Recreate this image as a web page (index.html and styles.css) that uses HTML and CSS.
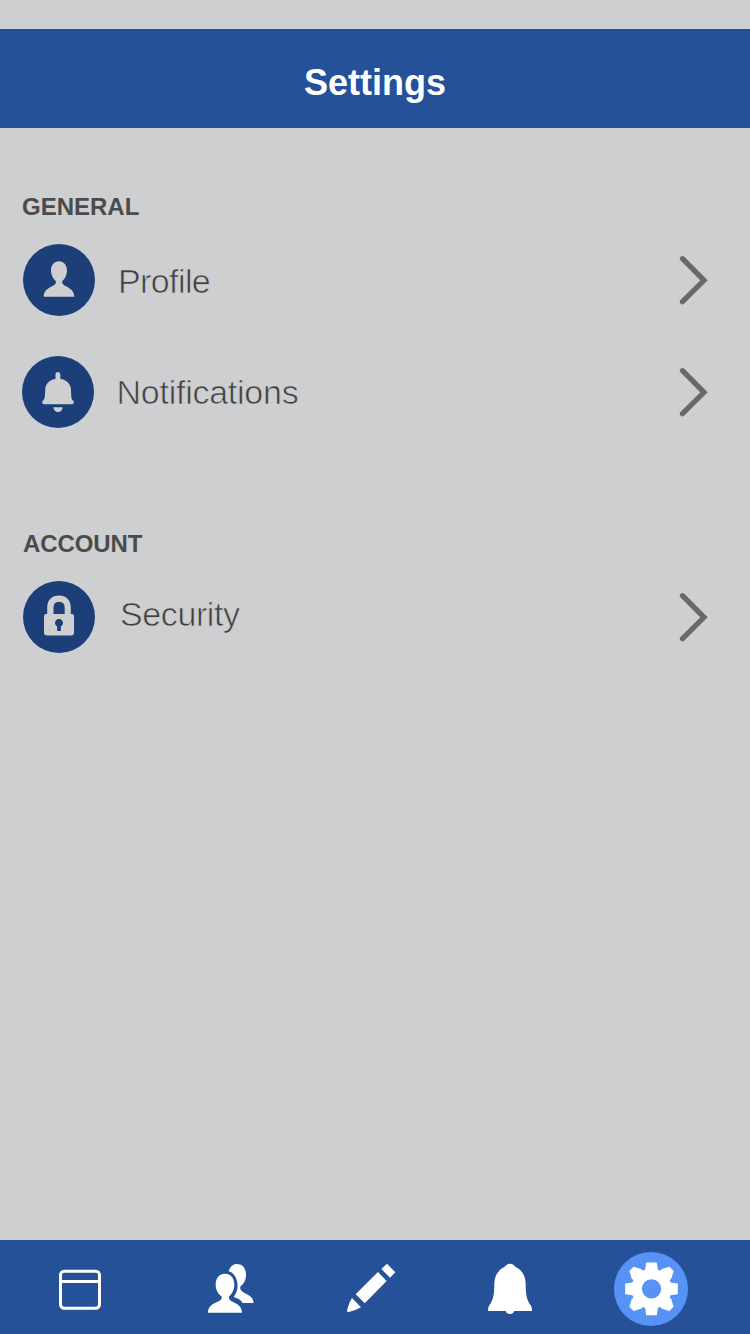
FILE: index.html
```html
<!DOCTYPE html>
<html lang="en">
<head>
<meta charset="utf-8">
<title>Settings</title>
<link rel="stylesheet" href="styles.css">
</head>
<body>
<div class="screen">
  <header class="header"><h1 class="title">Settings</h1></header>
  <main class="content">
    <section class="section">
      <h2 class="heading">GENERAL</h2>
      <a class="row">
        <svg class="badge" viewBox="0 0 72 72"><circle class="disc" cx="36" cy="36" r="36"/><path d="M36 17.200C31 17.200 27.800 21.500 28 27C28.200 31 30 35 32.800 37V39C31.500 43 21 43 20.700 52.800H51.300C51 43 40.500 43 39.200 39V37C42 35 43.800 31 44 27C44.200 21.500 41 17.200 36 17.200Z"/></svg>
        <span class="label label-profile">Profile</span>
        <svg class="chevron" viewBox="0 0 32 52"><path d="M4.500 4.700L26 26.300L4.500 47.700"/></svg>
      </a>
      <a class="row row-notifications">
        <svg class="badge" viewBox="0 0 72 72"><circle class="disc" cx="36" cy="36" r="36"/><path d="M33.500 23V18.500Q33.500 16 36 16Q38.300 16 38.300 18.500V23C44 23.300 48.800 27.500 49 34C49.200 40 49.200 43.500 51 44.500Q51.800 45 51.800 46.500Q51.800 48.300 50 48.300H22Q20.200 48.300 20.200 46.500Q20.200 45 21 44.500C22.800 43.500 23 40 23.200 34C23.500 27.500 28 23.300 33.500 23ZM31.300 51.200H40.700Q40 56 36 56Q32 56 31.300 51.200Z"/></svg>
        <span class="label label-notifications">Notifications</span>
        <svg class="chevron" viewBox="0 0 32 52"><path d="M4.500 4.700L26 26.300L4.500 47.700"/></svg>
      </a>
    </section>
    <section class="section section-account">
      <h2 class="heading heading-account">ACCOUNT</h2>
      <a class="row">
        <svg class="badge" viewBox="0 0 72 72"><circle class="disc" cx="36" cy="36" r="36"/><path fill-rule="evenodd" d="M24.200 33V26.500C24.200 19 29 14.600 36 14.600S47.800 19 47.800 26.500V33H49Q51 33 51 35V51.500Q51 54.500 48 54.500H24Q21 54.500 21 51.500V35Q21 33 23 33ZM30.500 33H41.700V27Q41.700 20.700 36 20.700T30.500 27ZM34.100 50H37.900V45.600A4 4 0 1 0 34.100 45.600Z"/></svg>
        <span class="label label-security">Security</span>
        <svg class="chevron" viewBox="0 0 32 52"><path d="M4.500 4.700L26 26.300L4.500 47.700"/></svg>
      </a>
    </section>
  </main>
  <nav class="tabs">
    <svg class="tab tab-first" viewBox="0 30 240 282"><rect class="outline" x="61.500" y="123.500" width="117" height="111" rx="11"/><path class="outline" d="M62 154.500H178"/></svg>
    <svg class="tab" viewBox="0 0 240 282"><path d="M116 94C121 79 129 72 141 72C158 72 168 85 168 105C168 121 161 132 151 139V147C157 163 190 162 191 189H158C152 179 142 174 131 171C143 154 146 136 139 117C135 105 127 97 116 94Z"/><path d="M105 101C88 101 77 114 77 134C77 149 84 162 95 169V175C89 190 55 187 54 218H156C155 187 121 190 117 175V169C126 162 133 149 133 134C133 114 122 101 105 101Z"/></svg>
    <svg class="tab tab-next" viewBox="0 0 240 282"><path d="M171 71L196 97L180 113L154 87ZM144 96L170 123L104 190L77 163ZM66 174L93 202Q78 211 54 217Q50 216 52 208Q55 190 66 174Z"/></svg>
    <svg class="tab tab-next" viewBox="0 0 240 282"><path d="M120 71C128 71 132 76 137 81C157 91 166 107 167 130C167 163 170 182 183 197Q186 202 186 213H133C131 219 127 222 120 222S109 219 107 213H54Q54 202 57 197C70 182 73 163 73 130C74 107 83 91 103 81C108 76 112 71 120 71Z"/></svg>
    <svg class="tab tab-next" viewBox="30 15 240 282"><circle class="active" cx="153" cy="162" r="111"/>
      <g transform="translate(154.500 161.500)"><circle r="60"/>
        <path id="bar" d="M-16-79H16L19-57L30-50V50L19 57L16 79H-16L-19 57L-30 50V-50L-19-57Z"/><use href="#bar" transform="rotate(90)"/>
        <path id="diagonal" d="M-9-85H9L20-64V64L9 85H-9L-20 64V-64Z" transform="rotate(45)"/><use href="#diagonal" transform="rotate(90)"/>
        <circle class="active" r="29"/></g></svg>
  </nav>
</div>
</body>
</html>
```
FILE: styles.css
```css
body { margin: 0; background: #cecfd1; font-family: "Liberation Sans", Arial, sans-serif; }
.screen { display: flex; flex-direction: column; box-sizing: border-box; height: 1334px; padding-top: 29px; }
.header { flex: none; box-sizing: border-box; height: 99px; padding-top: 33px; background: #255199; text-align: center; }
.title { margin: 0; color: #fff; font-size: 36px; line-height: 41px; }
.content { flex: 1; }
.section { padding: 65px 39px 0 22px; }
.section-account { padding-top: 102px; padding-left: 23px; }
.heading { margin: 0 0 24px; color: #4b4b4b; font-size: 24px; line-height: 27px; }
.heading-account { letter-spacing: -.1px; }
.row { display: flex; align-items: center; height: 72px; padding-left: 1px; }
.section-account .row { padding-left: 0; }
.row-notifications { margin-top: 40px; padding-left: 0; }
.badge { flex: none; width: 72px; height: 72px; fill: #cecfd1; }
.disc { fill: #1c3f7a; }
.label { flex: 1; color: #404040; font-size: 34px; line-height: 40px; -webkit-text-stroke: .7px #cecfd1; }
.label-profile { padding: 2px 0 0 23px; letter-spacing: -.6px; }
.label-notifications { padding: 0 0 0 22.5px; letter-spacing: -.25px; }
.label-security { padding: 0 0 6px 25px; letter-spacing: -.4px; }
.chevron { flex: none; width: 32px; height: 52px; margin-right: 1px; fill: none; stroke: #6a6967; stroke-width: 5.3; stroke-linecap: round; }
.tabs { flex: none; display: flex; height: 94px; padding-left: 40px; background: #255199; }
.tab { flex: none; width: 80px; height: 94px; margin-right: 60px; fill: #fff; }
.tab-first { margin-right: 70px; }
.outline { fill: none; stroke: #fff; stroke-width: 9; }
.active { fill: #5792f6; }
```
